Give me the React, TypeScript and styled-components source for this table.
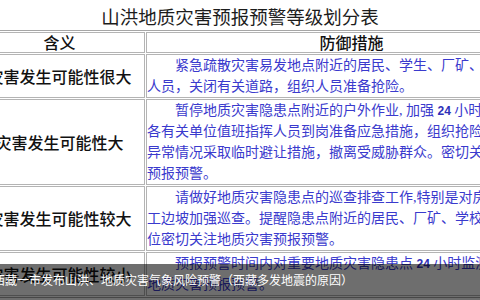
import React from "react";
import styled, { createGlobalStyle } from "styled-components";

const GlobalStyle = createGlobalStyle`
  html, body {
    margin: 0;
    padding: 0;
    background: #fff;
    overflow: hidden;
  }
`;

const Page = styled.div`
  position: relative;
  width: 480px;
  height: 300px;
  overflow: hidden;
  background: #fff;
`;

const Title = styled.h1`
  margin: 0;
  height: 30px;
  box-sizing: border-box;
  padding-top: 3px;
  font: 400 18.5px/26px "Noto Sans CJK SC", sans-serif;
  color: #1c1c1c;
  text-align: center;
`;

const Sheet = styled.table`
  margin-left: -28px;
  width: 587px;
  table-layout: fixed;
  border-collapse: separate;
  border-spacing: 1px;
  border: 1px solid #a6a6a6;
`;

const Col = styled.col<{ $w: number }>`
  width: ${(p) => p.$w}px;
`;

const Head = styled.th`
  height: 19px;
  padding: 0;
  border: 1px solid #b4b4b4;
  font: 500 16px/19px "Noto Sans CJK SC", sans-serif;
  color: #111;
  text-align: center;
  white-space: nowrap;
`;

const Meaning = styled.td`
  padding: 0;
  border: 1px solid #b4b4b4;
  font: 500 16px/21px "Noto Sans CJK SC", sans-serif;
  color: #111;
  text-align: center;
  vertical-align: middle;
  white-space: nowrap;
`;

const Measure = styled.td`
  padding: 0;
  border: 1px solid #b4b4b4;
  font: 400 14px/21px "Liberation Serif", "Noto Sans CJK SC", serif;
  color: #3a3acd;
  text-align: left;
  vertical-align: top;
`;

const Line = styled.div<{ $indent?: boolean }>`
  white-space: nowrap;
  text-indent: ${(p) => (p.$indent ? "28px" : "0")};
`;

const Hours = styled.b`
  font: 700 12px "Liberation Sans", sans-serif;
  color: #2f2fb8;
`;

const Caption = styled.div`
  position: absolute;
  left: 0;
  right: 0;
  top: 264px;
  bottom: 0;
  box-sizing: border-box;
  padding-top: 8px;
  background: rgba(0, 0, 0, 0.57);
  font: 400 12px/16px "Noto Sans CJK SC", sans-serif;
  color: #fff;
  white-space: nowrap;
  text-indent: -7px;
`;

type Row = { level: string; lines: React.ReactNode[] };

const rows: Row[] = [
  {
    level: "灾害发生可能性很大",
    lines: ["紧急疏散灾害易发地点附近的居民、学生、厂矿、", "人员，关闭有关道路，组织人员准备抢险。"],
  },
  {
    level: "灾害发生可能性大",
    lines: [
      <>
        暂停地质灾害隐患点附近的户外作业, 加强 <Hours>24</Hours> 小时
      </>,
      "各有关单位值班指挥人员到岗准备应急措施，组织抢险",
      "异常情况采取临时避让措施，撤离受威胁群众。密切关",
      "预报预警。",
    ],
  },
  {
    level: "灾害发生可能性较大",
    lines: [
      "请做好地质灾害隐患点的巡查排查工作,特别是对房",
      "工边坡加强巡查。提醒隐患点附近的居民、厂矿、学校",
      "位密切关注地质灾害预报预警。",
    ],
  },
  {
    level: "灾害发生可能性较小",
    lines: [
      <>
        预报预警时间内对重要地质灾害隐患点 <Hours>24</Hours> 小时监测
      </>,
      "地质灾害预报预警。",
    ],
  },
];

export default function App() {
  return (
    <Page>
      <GlobalStyle />
      <Title>山洪地质灾害预报预警等级划分表</Title>
      <Sheet>
        <colgroup>
          <Col $w={171} />
          <Col $w={411} />
        </colgroup>
        <thead>
          <tr>
            <Head>含义</Head>
            <Head>防御措施</Head>
          </tr>
        </thead>
        <tbody>
          {rows.map((r) => (
            <tr key={r.level}>
              <Meaning>{r.level}</Meaning>
              <Measure>
                {r.lines.map((l, i) => (
                  <Line key={i} $indent={i === 0}>
                    {l}
                  </Line>
                ))}
              </Measure>
            </tr>
          ))}
        </tbody>
      </Sheet>
      <Caption>西藏一市发布山洪、地质灾害气象风险预警（西藏多发地震的原因）</Caption>
    </Page>
  );
}
